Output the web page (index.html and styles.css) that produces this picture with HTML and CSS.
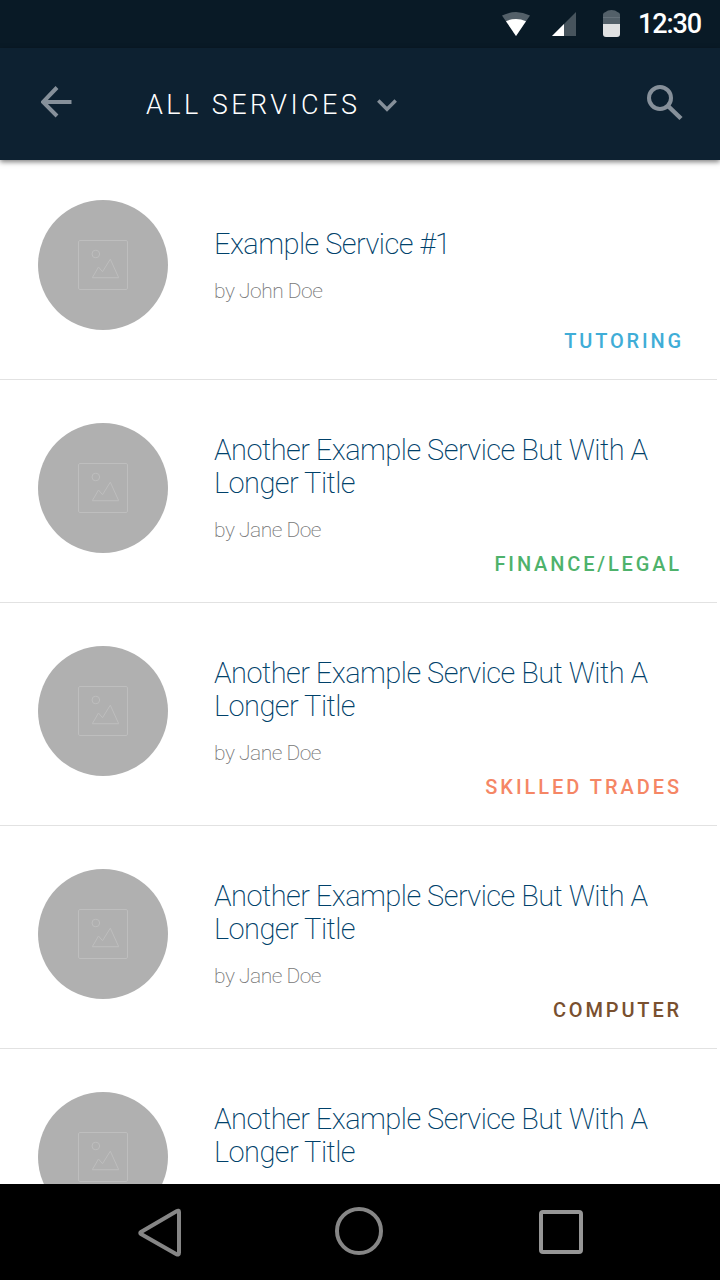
FILE: index.html
```html
<!DOCTYPE html>
<html lang="en">
<head>
<meta charset="utf-8">
<title>All Services</title>
<link rel="stylesheet" href="styles.css">
</head>
<body>
<svg class="defs" aria-hidden="true">
  <symbol id="picture" viewBox="0 0 50 50">
    <g fill="none" stroke="#bebebe">
      <rect x="0.5" y="0.5" width="49" height="49" rx="1.5"/>
      <circle cx="17.8" cy="14" r="3.8"/>
      <path d="M14.3 37.7L20.5 27L24.5 31.7L32.3 19.2L40.7 37.7Z"/>
    </g>
  </symbol>
</svg>
<div class="screen">
  <div class="status">
    <svg class="wifi" width="28" height="24" viewBox="0 0 28 24"><path d="M0 3.6Q14 -3.6 28 3.6L14 24Z" fill="#536069"/><path d="M4 9.2Q14 4.6 24 9.2L14 24Z" fill="#fff"/></svg>
    <svg class="signal" width="24" height="24" viewBox="0 0 24 24"><path d="M24 0V24H0Z" fill="#47545d"/><path d="M12 12V24H0Z" fill="#fff"/></svg>
    <svg class="battery" width="17" height="27" viewBox="0 0 17 27"><path d="M0 14V4.500Q0 2.500 2.500 2Q4.500 0 8.500 0Q12.500 0 14.500 2Q17 2.500 17 4.500V14Z" fill="#536069"/><path d="M0 7.500H17" stroke="#65717a"/><path d="M0 14H17V24Q17 27 14 27H3Q0 27 0 24Z" fill="#e0e1e2"/></svg>
    <span class="clock">12:30</span>
  </div>
  <header class="appbar">
    <svg class="back" width="32" height="32" viewBox="0 0 32 32"><path d="M30.500 16H3M16 1.500L2 16L16 30" fill="none" stroke="#86909a" stroke-width="4"/></svg>
    <h1 class="heading">ALL SERVICES</h1>
    <svg class="chevron" width="20" height="13" viewBox="0 0 20 13"><path d="M1.300 1.500L10 10.200L18.700 1.500" fill="none" stroke="#86909a" stroke-width="3.500"/></svg>
    <svg class="search" width="36" height="36" viewBox="0 0 36 36"><circle cx="13" cy="13" r="11" fill="none" stroke="#86909a" stroke-width="4"/><path d="M21 21L34 33.500" stroke="#86909a" stroke-width="4.500"/></svg>
  </header>
  <main class="list">
    <article class="row row-single">
      <div class="avatar"><svg width="50" height="50"><use href="#picture"/></svg></div>
      <div class="info"><h2 class="title">Example Service #1</h2><p class="author">by John Doe</p><span class="tag tutoring">TUTORING</span></div>
    </article>
    <article class="row">
      <div class="avatar"><svg width="50" height="50"><use href="#picture"/></svg></div>
      <div class="info"><h2 class="title">Another Example Service But With A<br>Longer Title</h2><p class="author">by Jane Doe</p><span class="tag finance">FINANCE/LEGAL</span></div>
    </article>
    <article class="row">
      <div class="avatar"><svg width="50" height="50"><use href="#picture"/></svg></div>
      <div class="info"><h2 class="title">Another Example Service But With A<br>Longer Title</h2><p class="author">by Jane Doe</p><span class="tag trades">SKILLED TRADES</span></div>
    </article>
    <article class="row">
      <div class="avatar"><svg width="50" height="50"><use href="#picture"/></svg></div>
      <div class="info"><h2 class="title">Another Example Service But With A<br>Longer Title</h2><p class="author">by Jane Doe</p><span class="tag computer">COMPUTER</span></div>
    </article>
    <article class="row">
      <div class="avatar"><svg width="50" height="50"><use href="#picture"/></svg></div>
      <div class="info"><h2 class="title">Another Example Service But With A<br>Longer Title</h2></div>
    </article>
  </main>
  <nav class="navbar">
    <svg class="nav-back" width="44" height="50" viewBox="0 0 44 50"><path d="M38.500 3.200Q41 1.900 41 4V44.500Q41 47.500 38.500 46.200L3 26Q1.500 25 3 24Z" fill="none" stroke="#868686" stroke-width="4"/></svg>
    <svg class="nav-home" width="48" height="48" viewBox="0 0 48 48"><circle cx="24" cy="24" r="22" fill="none" stroke="#868686" stroke-width="4"/></svg>
    <svg class="nav-recent" width="44" height="44" viewBox="0 0 44 44"><rect x="2" y="2" width="40" height="40" rx="2" fill="none" stroke="#969696" stroke-width="4"/></svg>
  </nav>
</div>
</body>
</html>
```
FILE: styles.css
```css
* { box-sizing: border-box; }
body, h1, h2, p { margin: 0; }
body { font-family: Roboto, "Liberation Sans", sans-serif; background: #fff; }
svg { display: block; flex: none; }
.defs { width: 0; height: 0; position: absolute; }
.screen { width: 720px; height: 1280px; display: flex; flex-direction: column; overflow: hidden; }

.status { height: 48px; flex: none; background: #091a26; display: flex; align-items: flex-start; padding-left: 502px; color: #fff; }
.wifi { margin-top: 12px; }
.signal { margin: 12px 0 0 22px; }
.battery { margin: 10px 0 0 27px; }
.clock { margin: 8px 0 0 18px; font-size: 27px; line-height: 32px; font-weight: 500; letter-spacing: -1.1px; }

.appbar { height: 112px; flex: none; background: #0d2131; display: flex; align-items: flex-start; padding: 0 37px 0 41px; box-shadow: 0 2px 5px rgba(0,0,0,.5); z-index: 1; }
.back { margin-top: 38px; }
.heading { width: 233px; margin: 41px 0 0 73px; font-size: 27px; line-height: 32px; font-weight: 300; letter-spacing: 3.45px; color: #fff; white-space: nowrap; }
.chevron { margin: 51px 0 0 -2px; }
.search { margin: 37px 0 0 auto; }

.list { flex: 1; min-height: 0; overflow: hidden; width: 717px; }
.row { height: 223px; display: flex; padding: 43px 0 26px 38px; border-bottom: 1px solid #e2e2e2; }
.row-single { height: 220px; padding-top: 40px; }
.avatar { width: 130px; height: 130px; flex: none; border-radius: 50%; background: #b0b0b0; display: flex; align-items: center; justify-content: center; }
.info { flex: 1; margin-left: 46px; padding-top: 11px; display: flex; flex-direction: column; }
.row-single .info { padding-top: 28px; }
.title { font-size: 29px; line-height: 33px; font-weight: 200; letter-spacing: -0.55px; color: #00416a; white-space: nowrap; }
.author { margin-top: 18px; font-size: 21px; line-height: 24px; font-weight: 200; letter-spacing: -0.5px; color: #777; }
.tag { margin: auto 34.500px 0 0; align-self: flex-end; font-size: 20px; line-height: 24px; font-weight: 500; letter-spacing: 2.85px; }
.row-single .tag { margin-right: 33px; }
.row .finance { margin-right: 35px; }
.row .trades { margin-right: 35px; letter-spacing: 2.95px; }
.row .computer { margin-right: 35px; }
.tutoring { color: #3fadd7; }
.finance { color: #4eb26b; }
.trades { color: #f58665; }
.computer { color: #79502f; }

.navbar { height: 96px; flex: none; background: #000; display: flex; align-items: flex-start; padding-left: 138px; }
.nav-back { margin-top: 24px; }
.nav-home { margin: 23px 0 0 153px; }
.nav-recent { margin: 26px 0 0 156px; }
```
